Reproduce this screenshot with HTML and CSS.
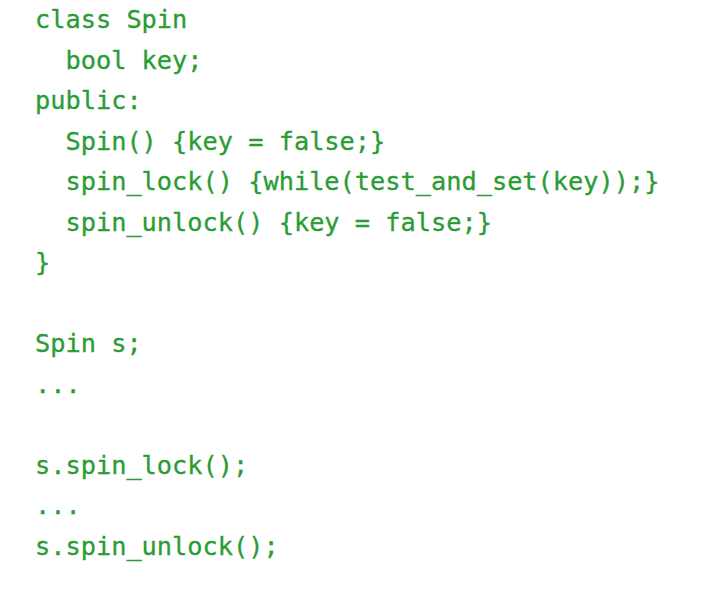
FILE: index.html
```html
<!DOCTYPE html>
<html>
<head>
<meta charset="utf-8">
<link rel="stylesheet" href="styles.css">
</head>
<body>
<pre class="code">class Spin
  bool key;
public:
  Spin() {key = false;}
  spin_lock() {while(test_and_set(key));}
  spin_unlock() {key = false;}
}

Spin s;
...

s.spin_lock();
...
s.spin_unlock();</pre>
</body>
</html>
```
FILE: styles.css
```css
html, body {
  margin: 0;
  padding: 0;
  background: #ffffff;
}
.code {
  margin: 0;
  padding: 0 0 0 35px;
  font-family: "DejaVu Sans Mono", monospace;
  font-size: 25.3px;
  line-height: 40.5px;
  color: #2a9c34;
  -webkit-text-stroke: 0.3px #2a9c34;
}
```
